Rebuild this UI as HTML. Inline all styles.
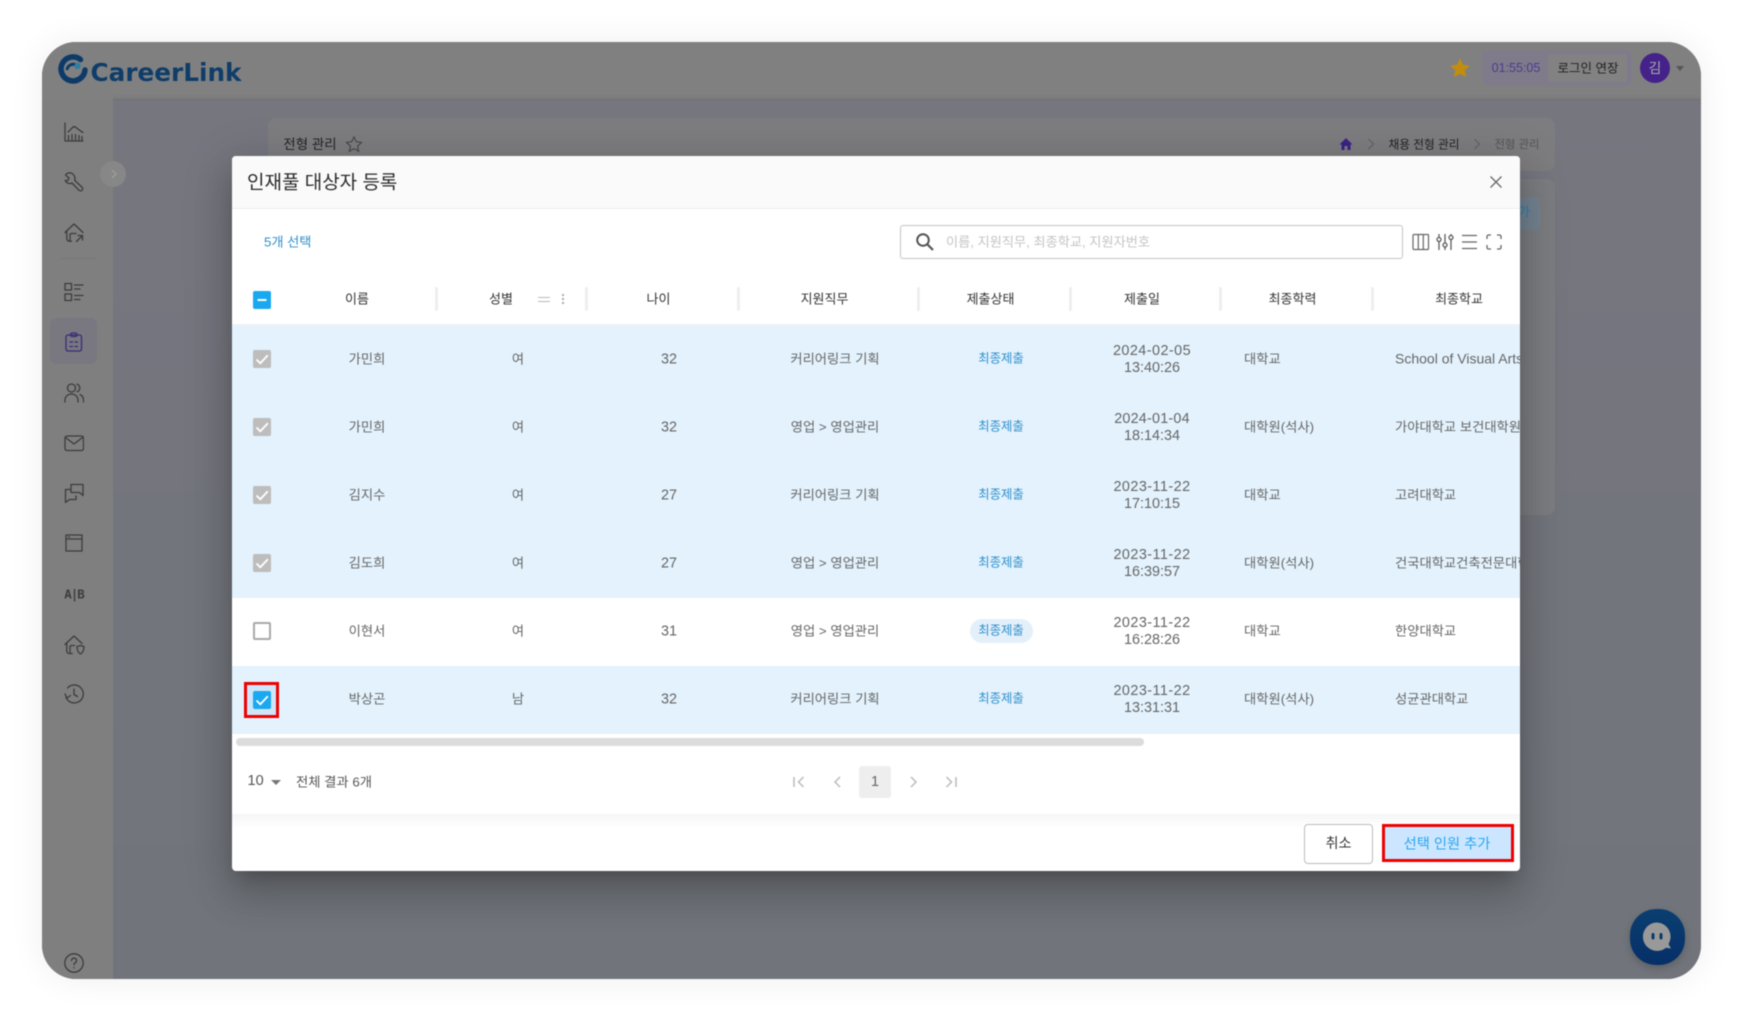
<!DOCTYPE html>
<html lang="ko"><head><meta charset="utf-8"><title>CareerLink</title>
<style>
*{box-sizing:border-box}
html,body{margin:0;padding:0;background:#fff;width:1743px;height:1021px;overflow:hidden}
body{font-family:"Liberation Sans","Noto Sans CJK KR",sans-serif;color:#333;position:relative}
.a{position:absolute;white-space:nowrap}
.c{position:absolute;white-space:nowrap;transform:translate(-50%,-50%)}
.l{position:absolute;white-space:nowrap;transform:translateY(-50%)}
#root{position:absolute;left:0;top:0;width:1743px;height:1021px;filter:blur(.4px)}
#frame{position:absolute;left:42px;top:42px;width:1659px;height:937px;border-radius:34px;overflow:hidden;background:#74767d;box-shadow:0 0 34px rgba(0,0,0,.07)}
.icon{position:absolute;fill:none;stroke:#3c3c3c;stroke-width:1.3;stroke-linecap:round;stroke-linejoin:round}
#modal{position:absolute;left:232px;top:156px;width:1288px;height:715px;background:#fff;border-radius:4px;box-shadow:0 11px 15px -7px rgba(0,0,0,.2),0 24px 38px 3px rgba(0,0,0,.14),0 9px 46px 8px rgba(0,0,0,.12)}
.row{position:absolute;left:232px;width:1288px;height:68px;background:#e3f2fd;overflow:hidden}
.row.w{background:#fff}
.row span{font-size:13.3px;color:#666;line-height:17px}
.row .n{font-size:14.4px;color:#666}
.row .d{font-size:14.4px;color:#666;text-align:center}
.row .st{color:#2f8fcc;font-size:12.4px}
.th{font-size:13px;color:#333;top:298px}
.sep{position:absolute;top:287px;width:3px;height:24px;background:#eee;border-radius:2px}
.cb{position:absolute;left:253px;width:18px;height:18px;border-radius:2px;background:#bdbdbd}
.cb svg{position:absolute;left:0;top:0}
</style></head><body>
<div id="root">
<div id="frame">
  <div class="a" style="left:0;top:0;width:1659px;height:57px;background:#808080"></div>
  <div class="a" style="left:0;top:57px;width:71px;height:880px;background:#7f7f7f"></div>
  <div class="a" style="left:71px;top:57px;width:1588px;height:880px;background:linear-gradient(180deg,#76767f,#71757b)"></div>
  <div class="a" style="left:71px;top:52px;width:1588px;height:6px;background:linear-gradient(180deg,rgba(0,0,0,0),rgba(0,0,0,.05))"></div>
</div>

<!-- logo -->
<svg class="a" style="left:56px;top:52px" width="200" height="36" viewBox="0 0 200 36">
  <path d="M24.5 7.5A12 12 0 1 0 29 18" fill="none" stroke="#0d3a68" stroke-width="5.5" stroke-linecap="round"/>
  <path d="M11 18a6 6 0 0 1 11-3" fill="none" stroke="#0d3a68" stroke-width="3"/>
  <circle cx="21.5" cy="14" r="3.2" fill="#2f7f9f"/>
  <text x="34.5" y="29" font-family="'DejaVu Sans','Liberation Sans',sans-serif" font-weight="700" font-size="25" fill="#0f3d69" textLength="151" lengthAdjust="spacingAndGlyphs">CareerLink</text>
</svg>

<!-- sidebar -->
<div class="a" style="left:50px;top:318px;width:47px;height:46px;border-radius:7px;background:#797780"></div>
<div class="a" style="left:60px;top:258px;width:36px;height:1px;background:#777"></div>
<svg class="icon" style="left:64px;top:122px" width="20" height="20" viewBox="0 0 20 20"><path d="M1 1v18h18M4.500 18.500v-5M8 18.500v-6M11.500 18.500v-6M15 18.500v-5M18 18.500v-4M4 10c2-1 3-4 6-5.500 3 1 5 4 9 6"/></svg>
<svg class="icon" style="left:64px;top:172px" width="20" height="20" viewBox="0 0 20 20"><path d="M7.500 1.200A5 5 0 0 0 1.500 3l3.500 3-1 2.300-2.800.2A5 5 0 0 0 8 11l7 7.300c1 .8 2.700.8 3.300-.3.600-1.100.3-2.200-.5-3l-7-6.500c.5-3-.3-5.800-3.300-7.300z"/></svg>
<svg class="icon" style="left:64px;top:223px" width="20" height="20" viewBox="0 0 20 20"><path d="M1 9.500L10 1l9 8.500M2.800 8.500v7c0 1.800 1 2.700 2.700 2.700h2M6 18V12c0-1 .6-1.500 1.500-1.500H12M12.500 18.500l6-6M14 12.500h4.500V17"/></svg>
<svg class="icon" style="left:64px;top:282px" width="20" height="20" viewBox="0 0 20 20"><rect x="1" y="1.500" width="6.500" height="6.500"/><rect x="1" y="12" width="6.500" height="6.500"/><path d="M10.500 3h8.500M10.500 7h5.500M10.500 13.500h8.500M10.500 17.500h5.500"/></svg>
<svg class="icon" style="left:65px;top:332px;stroke:#3a2c78" width="18" height="20" viewBox="0 0 18 20"><rect x="1" y="3" width="15.500" height="16" rx="2"/><rect x="5.500" y="1" width="6.500" height="3.500" rx="1.500"/><path d="M5 10h2.500M10 10h2.500M5 14.500h2.500M10 14.500h2.500"/></svg>
<svg class="icon" style="left:64px;top:383px" width="20" height="20" viewBox="0 0 20 20"><circle cx="7.500" cy="5" r="4"/><path d="M1 19v-2c0-3.500 3-6 6.500-6s6.500 2.500 6.500 6v2M13 1.200a4 4 0 0 1 0 7.600M16 11.500c2 1 3.500 3 3.500 5.500v2"/></svg>
<svg class="icon" style="left:64px;top:433px" width="20" height="20" viewBox="0 0 20 20"><rect x="1" y="3" width="18.500" height="14.500" rx="2"/><path d="M1.500 4.500L10 11l8.500-6.500"/></svg>
<svg class="icon" style="left:64px;top:483px" width="20" height="20" viewBox="0 0 20 20"><path d="M6 6.500H1.500v13l4-3h6.500V13M7 1.500h12v11l-3.500-3H7z"/></svg>
<svg class="icon" style="left:65px;top:534px" width="18" height="18" viewBox="0 0 18 18"><rect x="1" y="1" width="16" height="16"/><path d="M1 5h16M3.500 3h1"/></svg>
<div class="c" style="left:74px;top:594px;font-size:12.500px;color:#3c3c3c;font-family:'DejaVu Sans Mono',monospace;letter-spacing:-1px;font-weight:700">A|B</div>
<svg class="icon" style="left:64px;top:635px" width="21" height="20" viewBox="0 0 21 20"><path d="M1 9.500L10 1l8 7.500M2.800 8v8c0 1.500 1 2.500 2.500 2.500h3M6 18.500V12c0-1 .6-1.500 1.500-1.500h3M13 11.500l3.500-1 3.500 1c0 3.500-1 6-3.500 7.500-2.500-1.500-3.500-4-3.500-7.500z"/></svg>
<svg class="icon" style="left:64px;top:684px" width="20" height="20" viewBox="0 0 20 20"><path d="M2 13.500A9 9 0 1 0 3.500 4M1 10l2 4 3.500-2.500M10 5v5.500l3.500 2"/></svg>
<svg class="icon" style="left:64px;top:953px" width="20" height="20" viewBox="0 0 20 20"><circle cx="10" cy="10" r="9.200"/><path d="M7.500 7.500a2.500 2.500 0 1 1 3.800 2.200c-.9.600-1.300 1-1.300 2M10 14.500v.3"/></svg>
<div class="a" style="left:100px;top:161px;width:26px;height:26px;border-radius:50%;background:#878787"></div>
<svg class="a" style="left:110px;top:168px" width="8" height="12" viewBox="0 0 8 12"><path d="M2 2l4 4-4 4" fill="none" stroke="#9c9c9c" stroke-width="1.500"/></svg>

<!-- top right -->
<svg class="a" style="left:1449px;top:57px" width="22" height="22" viewBox="0 0 24 24"><path d="M12 1.500l3.200 7 7.600.9-5.600 5.100 1.500 7.500L12 18.300 5.300 22l1.500-7.500L1.200 9.400l7.600-.9z" fill="#c28d0e"/></svg>
<div class="a" style="left:1482px;top:50px;width:150px;height:36px;border-radius:6px;background:#807b8a"></div>
<div class="a" style="left:1548px;top:54px;width:79px;height:28px;border-radius:3px;background:#828282"></div>
<div class="c" style="left:1516px;top:68px;font-size:12.500px;color:#4b3b8d">01:55:05</div>
<div class="c" style="left:1588px;top:67px;font-size:12.500px;color:#222">로그인 연장</div>
<div class="a" style="left:1640px;top:53px;width:30px;height:30px;border-radius:50%;background:#45228a"></div>
<div class="c" style="left:1655px;top:68px;font-size:14px;color:#aaa">김</div>
<div class="a" style="left:1676px;top:66px;width:0;height:0;border-left:4px solid transparent;border-right:4px solid transparent;border-top:5px solid #555"></div>

<!-- page cards -->
<div class="a" style="left:268px;top:118px;width:1287px;height:53px;border-radius:8px;background:#7d7d80"></div>
<div class="a" style="left:268px;top:179px;width:1287px;height:336px;border-radius:8px;background:#7c7d81"></div>
<div class="a" style="left:1500px;top:197px;width:40px;height:33px;border-radius:3px;background:#748391"></div>
<div class="c" style="left:1524px;top:211px;font-size:13px;color:#2a83b4">가</div>
<div class="c" style="left:310px;top:143px;font-size:13.500px;color:#222">전형 관리</div>
<svg class="a" style="left:345px;top:135px" width="18" height="18" viewBox="0 0 24 24"><path d="M12 2.500l3 6.500 7 .9-5.200 4.800 1.400 7L12 18.200 5.800 21.700l1.400-7L2 9.900 9 9z" fill="none" stroke="#4a4a4a" stroke-width="1.600"/></svg>
<svg class="a" style="left:1339px;top:137px" width="14" height="14" viewBox="0 0 14 14"><path d="M7 1L.5 7.500h2V13h3V9h3v4h3V7.500h2z" fill="#3b2485"/></svg>
<svg class="a" style="left:1367px;top:138px" width="8" height="12" viewBox="0 0 8 12"><path d="M1.500 1l5 5-5 5" fill="none" stroke="#5e5e5e"/></svg>
<div class="c" style="left:1424px;top:144px;font-size:11.700px;color:#222">채용 전형 관리</div>
<svg class="a" style="left:1473px;top:138px" width="8" height="12" viewBox="0 0 8 12"><path d="M1.500 1l5 5-5 5" fill="none" stroke="#5e5e5e"/></svg>
<div class="c" style="left:1517px;top:144px;font-size:11.400px;color:#555">전형 관리</div>

<!-- chat -->
<div class="a" style="left:1630px;top:909px;width:55px;height:56px;border-radius:26px;background:linear-gradient(180deg,#0b3f70,#062f68);box-shadow:0 3px 8px rgba(0,0,0,.2)"></div>
<svg class="a" style="left:1640px;top:920px" width="34" height="34" viewBox="0 0 34 34"><path d="M17 2.500a14.200 14.200 0 1 0 9 25.300l5 .7-2.500-4.500A14.200 14.200 0 0 0 17 2.500z" fill="#999"/><rect x="11.500" y="13" width="3" height="6.500" rx="1.500" fill="#0a3a6c"/><rect x="19.500" y="13" width="3" height="6.500" rx="1.500" fill="#0a3a6c"/></svg>

<!-- modal -->
<div id="modal"></div>
<div class="a" style="left:232px;top:156px;width:1288px;height:53px;background:#fafafa;border-bottom:1px solid #eee;border-radius:4px 4px 0 0"></div>
<div class="l" style="left:247px;top:181px;font-size:19px;color:#2b2b2b">인재풀 대상자 등록</div>
<svg class="a" style="left:1489px;top:175px" width="14" height="14" viewBox="0 0 14 14"><path d="M1.500 1.500l11 11M12.500 1.500l-11 11" stroke="#6a6a6a" stroke-width="1.300"/></svg>
<div class="l" style="left:264px;top:241px;font-size:13.200px;color:#2f8fcc">5개 선택</div>

<!-- search -->
<div class="a" style="left:900px;top:225px;width:503px;height:34px;border:1px solid #c4c4c4;border-radius:3px;background:#fff"></div>
<svg class="a" style="left:915px;top:232px" width="20" height="20" viewBox="0 0 20 20"><circle cx="8" cy="8" r="5.800" fill="none" stroke="#555" stroke-width="2"/><path d="M12.500 12.500l5.500 5.500" stroke="#555" stroke-width="2.200"/></svg>
<div class="l" style="left:946px;top:241px;font-size:13.200px;color:#c4c4c4">이름, 지원직무, 최종학교, 지원자번호</div>
<svg class="a" style="left:1412px;top:233px" width="18" height="18" viewBox="0 0 18 18"><rect x="1" y="1.500" width="15.500" height="15" rx="1" fill="none" stroke="#666" stroke-width="1.200"/><path d="M6.300 1.500v15M11.300 1.500v15" stroke="#666" stroke-width="1.200"/></svg>
<svg class="a" style="left:1436px;top:233px" width="18" height="18" viewBox="0 0 18 18"><path d="M3 1v3M3 9v8M9 1v9M9 14v3M15 1v1M15 7v10" stroke="#5c5c5c" stroke-width="1.300"/><circle cx="3" cy="6.500" r="2" fill="none" stroke="#5c5c5c" stroke-width="1.300"/><circle cx="9" cy="12" r="2" fill="none" stroke="#5c5c5c" stroke-width="1.300"/><circle cx="15" cy="4.500" r="2" fill="none" stroke="#5c5c5c" stroke-width="1.300"/></svg>
<svg class="a" style="left:1461px;top:233px" width="18" height="18" viewBox="0 0 18 18"><path d="M1 2.500h15M1 9h15M1 15.500h15" stroke="#666" stroke-width="1.200"/></svg>
<svg class="a" style="left:1486px;top:234px" width="16" height="16" viewBox="0 0 16 16"><path d="M1 5V2.500A1.500 1.500 0 0 1 2.500 1H5M11 1h2.500A1.500 1.500 0 0 1 15 2.500V5M15 11v2.500a1.500 1.500 0 0 1-1.500 1.500H11M5 15H2.500A1.500 1.500 0 0 1 1 13.500V11" fill="none" stroke="#666" stroke-width="1.300"/></svg>

<!-- table head -->
<div class="a" style="left:232px;top:324px;width:1288px;height:2px;background:#eef1f3"></div>
<div class="cb" style="top:291px;background:#1aa8f0"><svg width="18" height="18"><path d="M4.500 9h9" stroke="#fff" stroke-width="2"/></svg></div>
<div class="c th" style="left:357px">이름</div>
<div class="c th" style="left:501px">성별</div>
<div class="a" style="left:538px;top:297px;width:12px;height:5px;border-top:1px solid #bbb;border-bottom:1px solid #bbb"></div>
<div class="a" style="left:562px;top:294px;width:2px;height:2px;background:#aaa;box-shadow:0 4px 0 #aaa,0 8px 0 #aaa"></div>
<div class="c th" style="left:658.500px">나이</div>
<div class="c th" style="left:824.500px">지원직무</div>
<div class="c th" style="left:990.500px">제출상태</div>
<div class="c th" style="left:1142px">제출일</div>
<div class="c th" style="left:1292.500px">최종학력</div>
<div class="c th" style="left:1459px">최종학교</div>
<div class="sep" style="left:435px"></div><div class="sep" style="left:585px"></div><div class="sep" style="left:737px"></div><div class="sep" style="left:917px"></div><div class="sep" style="left:1069px"></div><div class="sep" style="left:1219px"></div><div class="sep" style="left:1371px"></div>

<!-- rows -->
<div class="row" style="top:326px">
  <span class="c" style="left:135px;top:33px">가민희</span><span class="c" style="left:286px;top:33px">여</span><span class="c n" style="left:437px;top:33.500px">32</span><span class="c" style="left:603px;top:33px">커리어링크 기획</span><span class="c st" style="left:769px;top:33px">최종제출</span>
  <span class="c d" style="left:920px;top:33.500px"><span class="d" style="letter-spacing:.45px">2024-02-05</span><br>13:40:26</span><span class="l" style="left:1012px;top:33px">대학교</span><span class="l" style="left:1163px;top:33px;font-size:14px">School of Visual Arts</span>
</div>
<div class="row" style="top:394px">
  <span class="c" style="left:135px;top:33px">가민희</span><span class="c" style="left:286px;top:33px">여</span><span class="c n" style="left:437px;top:33.500px">32</span><span class="c" style="left:603px;top:33px">영업 &gt; 영업관리</span><span class="c st" style="left:769px;top:33px">최종제출</span>
  <span class="c d" style="left:920px;top:33.500px"><span class="d" style="letter-spacing:.2px">2024-01-04</span><br>18:14:34</span><span class="l" style="left:1012px;top:33px">대학원(석사)</span><span class="l" style="left:1163px;top:33px">가야대학교 보건대학원</span>
</div>
<div class="row" style="top:462px">
  <span class="c" style="left:135px;top:33px">김지수</span><span class="c" style="left:286px;top:33px">여</span><span class="c n" style="left:437px;top:33.500px">27</span><span class="c" style="left:603px;top:33px">커리어링크 기획</span><span class="c st" style="left:769px;top:33px">최종제출</span>
  <span class="c d" style="left:920px;top:33.500px"><span class="d" style="letter-spacing:.45px">2023-11-22</span><br>17:10:15</span><span class="l" style="left:1012px;top:33px">대학교</span><span class="l" style="left:1163px;top:33px">고려대학교</span>
</div>
<div class="row" style="top:530px">
  <span class="c" style="left:135px;top:33px">김도희</span><span class="c" style="left:286px;top:33px">여</span><span class="c n" style="left:437px;top:33.500px">27</span><span class="c" style="left:603px;top:33px">영업 &gt; 영업관리</span><span class="c st" style="left:769px;top:33px">최종제출</span>
  <span class="c d" style="left:920px;top:33.500px"><span class="d" style="letter-spacing:.45px">2023-11-22</span><br>16:39:57</span><span class="l" style="left:1012px;top:33px">대학원(석사)</span><span class="l" style="left:1163px;top:33px">건국대학교건축전문대학원</span>
</div>
<div class="row w" style="top:598px">
  <span class="c" style="left:135px;top:33px">이현서</span><span class="c" style="left:286px;top:33px">여</span><span class="c n" style="left:437px;top:33.500px">31</span><span class="c" style="left:603px;top:33px">영업 &gt; 영업관리</span>
  <span class="a" style="left:738px;top:21px;width:63px;height:24px;border-radius:12px;background:#e3f0fa"></span><span class="c st" style="left:769px;top:33px">최종제출</span>
  <span class="c d" style="left:920px;top:33.500px"><span class="d" style="letter-spacing:.45px">2023-11-22</span><br>16:28:26</span><span class="l" style="left:1012px;top:33px">대학교</span><span class="l" style="left:1163px;top:33px">한양대학교</span>
</div>
<div class="row" style="top:666px">
  <span class="c" style="left:135px;top:33px">박상곤</span><span class="c" style="left:286px;top:33px">남</span><span class="c n" style="left:437px;top:33.500px">32</span><span class="c" style="left:603px;top:33px">커리어링크 기획</span><span class="c st" style="left:769px;top:33px">최종제출</span>
  <span class="c d" style="left:920px;top:33.500px"><span class="d" style="letter-spacing:.45px">2023-11-22</span><br>13:31:31</span><span class="l" style="left:1012px;top:33px">대학원(석사)</span><span class="l" style="left:1163px;top:33px">성균관대학교</span>
</div>

<!-- checkboxes -->
<div class="cb" style="top:349.500px"><svg width="18" height="18"><path d="M3.500 9.500l3.800 3.800 7.500-8" fill="none" stroke="#fff" stroke-width="1.800"/></svg></div>
<div class="cb" style="top:417.500px"><svg width="18" height="18"><path d="M3.500 9.500l3.800 3.800 7.500-8" fill="none" stroke="#fff" stroke-width="1.800"/></svg></div>
<div class="cb" style="top:485.500px"><svg width="18" height="18"><path d="M3.500 9.500l3.800 3.800 7.500-8" fill="none" stroke="#fff" stroke-width="1.800"/></svg></div>
<div class="cb" style="top:553.500px"><svg width="18" height="18"><path d="M3.500 9.500l3.800 3.800 7.500-8" fill="none" stroke="#fff" stroke-width="1.800"/></svg></div>
<div class="cb" style="top:621.500px;background:#fff;border:2px solid #a9a9a9"></div>
<div class="a" style="left:244px;top:682px;width:35px;height:36px;background:#cfe6fa;border:3px solid #ee0000"></div>
<div class="cb" style="top:690.500px;background:#1aa8f0"><svg width="18" height="18"><path d="M3.500 9.500l3.800 3.800 7.500-8" fill="none" stroke="#fff" stroke-width="1.800"/></svg></div>

<!-- scrollbar -->
<div class="a" style="left:236px;top:738px;width:908px;height:8px;border-radius:4px;background:#dcdcdc"></div>

<!-- pagination -->
<div class="l" style="left:247.500px;top:781px;font-size:14.500px;color:#555">10</div>
<div class="a" style="left:271px;top:780px;width:0;height:0;border-left:5px solid transparent;border-right:5px solid transparent;border-top:5px solid #777"></div>
<div class="l" style="left:296px;top:781px;font-size:13.300px;color:#555">전체 결과 6개</div>
<svg class="a" style="left:792px;top:776px" width="14" height="12" viewBox="0 0 14 12"><path d="M2 1v10M11.500 1l-5 5 5 5" fill="none" stroke="#bbb" stroke-width="1.500"/></svg>
<svg class="a" style="left:831px;top:776px" width="12" height="12" viewBox="0 0 12 12"><path d="M9 1L4 6l5 5" fill="none" stroke="#bbb" stroke-width="1.500"/></svg>
<div class="a" style="left:859px;top:766px;width:32px;height:32px;border-radius:3px;background:#eee"></div>
<div class="c" style="left:875px;top:782px;font-size:14.500px;color:#666">1</div>
<svg class="a" style="left:908px;top:776px" width="12" height="12" viewBox="0 0 12 12"><path d="M3 1l5 5-5 5" fill="none" stroke="#bbb" stroke-width="1.500"/></svg>
<svg class="a" style="left:944px;top:776px" width="14" height="12" viewBox="0 0 14 12"><path d="M12 1v10M2.500 1l5 5-5 5" fill="none" stroke="#bbb" stroke-width="1.500"/></svg>

<!-- footer -->
<div class="a" style="left:232px;top:814px;width:1288px;height:14px;background:linear-gradient(180deg,#f6f6f6,#fff)"></div>
<div class="a" style="left:1304px;top:824px;width:69px;height:40px;border:1px solid #bdbdbd;border-radius:4px;background:#fff"></div>
<div class="c" style="left:1338.500px;top:843px;font-size:14px;color:#333">취소</div>
<div class="a" style="left:1382px;top:824px;width:132px;height:38px;border:3px solid #ee0000;background:#cce6ff"></div>
<div class="c" style="left:1447px;top:843px;font-size:14.300px;color:#2aa6ee">선택 인원 추가</div>
</div>
</body></html>
